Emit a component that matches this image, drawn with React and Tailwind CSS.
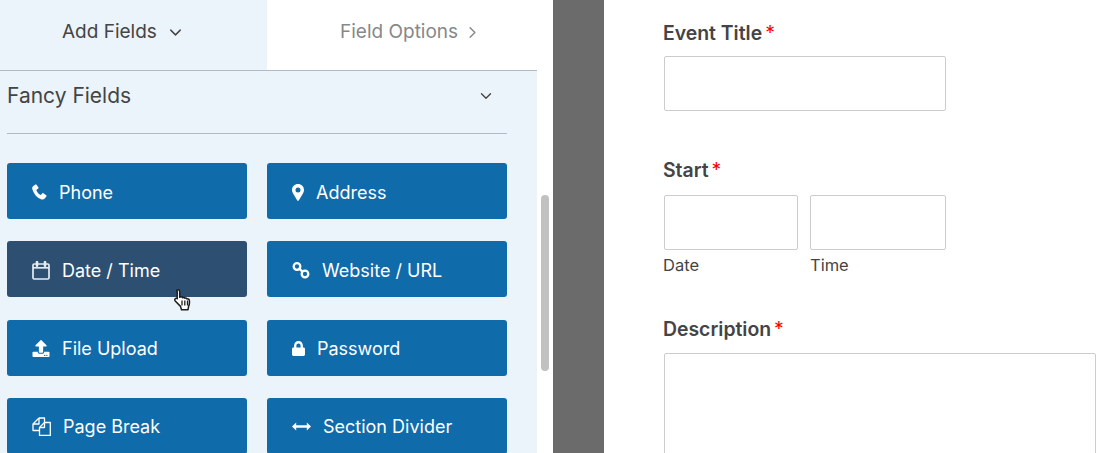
import React from "react";
import { ChevronDown, ChevronRight } from "lucide-react";
import { FaUpload, FaLock } from "react-icons/fa";

function PhoneIcon() {
  return (
    <svg width="15" height="16" viewBox="0 0 15 16" fill="currentColor">
      <path d="M3.400.6 1.300 1.900C.2 2.700 0 4 .4 5.400c1.300 4.300 4.400 8.100 8.600 9.800 1.500.6 3 .3 3.900-.9l1.500-1.900c.3-.4.200-.9-.2-1.200l-2.800-1.900c-.4-.3-.9-.2-1.200.1l-1.100 1.300c-.2.300-.6.300-.9.100-1.700-1-3-2.600-3.700-4.400-.1-.3 0-.7.300-.9l1.400-.9c.4-.3.500-.8.300-1.200L4.700.9C4.400.4 3.800.3 3.400.6z" />
    </svg>
  );
}

function MarkerIcon() {
  return (
    <svg width="12" height="17" viewBox="0 0 12 17" fill="currentColor">
      <path fillRule="evenodd" d="M6 0c3.300 0 6 2.600 6 5.900 0 1.100-.3 2-.8 3L6.900 16.200c-.4.800-1.400.8-1.800 0L.8 8.900C.3 7.900 0 7 0 5.900 0 2.600 2.700 0 6 0zm0 3.400a2.500 2.500 0 1 0 0 5 2.500 2.500 0 0 0 0-5z" />
    </svg>
  );
}

function CalendarIcon() {
  return (
    <svg width="18" height="19" viewBox="0 0 18 19" fill="none" stroke="#e6ebf1" strokeWidth="1.700">
      <rect x="1" y="3" width="16" height="15" rx="1.200" />
      <path d="M1 6.800h16" />
      <path d="M5 1v3.800M13 1v3.800" strokeWidth="2.600" strokeLinecap="round" />
    </svg>
  );
}

function LinkIcon() {
  return (
    <svg width="18" height="17" viewBox="0 0 18 17" fill="none" stroke="currentColor" strokeWidth="2.300">
      <circle cx="5" cy="4.500" r="3.300" />
      <circle cx="13" cy="12" r="3.300" />
      <path d="M7 6.300l4 3.800" />
    </svg>
  );
}

function CopyIcon() {
  return (
    <svg width="19" height="19" viewBox="0 0 19 19" fill="none" stroke="currentColor" strokeWidth="1.300" strokeLinejoin="round">
      <path d="M7 1h5.500v4.500M7 1 1 7v6.500h6" />
      <path d="M7 1v6H1" />
      <path d="M12.500 5.500h5.800v13H7.500v-8z" />
      <path d="M12.500 5.500v5h-5" />
    </svg>
  );
}

function ArrowsIcon() {
  return (
    <svg width="19" height="9" viewBox="0 0 19 9" fill="currentColor">
      <path d="M0 4.500 4.200.6v2.600h10.600V.6L19 4.500l-4.200 3.900V5.800H4.200v2.600z" />
    </svg>
  );
}

const fields = [
  { label: "Phone", icon: <PhoneIcon /> },
  { label: "Address", icon: <MarkerIcon /> },
  { label: "Date / Time", icon: <CalendarIcon />, active: true },
  { label: "Website / URL", icon: <LinkIcon /> },
  { label: "File Upload", icon: <FaUpload className="h-[17px] w-[18px]" /> },
  { label: "Password", icon: <FaLock className="h-[15px] w-[13px]" /> },
  { label: "Page Break", icon: <CopyIcon /> },
  { label: "Section Divider", icon: <ArrowsIcon /> },
];

function HandCursor() {
  return (
    <svg className="absolute left-[167px] top-[48px]" width="18" height="22" viewBox="0 0 18 22">
      <path
        d="M4 .8c1 0 1.700.7 1.700 1.600v5.800l1.100-.3c.8-.2 1.500.2 1.700.8.7-.5 1.700-.3 2.100.4.800-.4 1.800-.1 2.100.7.700-.2 2.400.1 2.600 1.300.4 2.200.2 4.300-.7 6.200l-.6 3.400H7.500l-1-3.300L1.200 12c-.7-.9-.5-1.900.2-2.400.6-.4 1.300-.3 1.800.1V2.400C2.300 1.500 3.100.8 4 .8z"
        fill="#fff"
        stroke="#1c1c1c"
        strokeWidth="1.500"
        strokeLinejoin="round"
      />
      <path d="M8 11.500v5M10.800 11.500v5M13.500 11.500v5" stroke="#1c1c1c" strokeWidth="1.300" fill="none" />
    </svg>
  );
}

function FieldButton({ field }) {
  return (
    <div className={`relative flex h-[56px] items-center gap-[12px] rounded-[3px] pl-[25px] pt-[2px] text-[18px] text-white ${field.active ? "bg-[#2d4f71]" : "bg-[#106bab]"}`}>
      {field.icon}
      <span>{field.label}</span>
      {field.active && <HandCursor />}
    </div>
  );
}

function Label({ text }) {
  return (
    <div className="flex text-[19.400px] font-semibold leading-[24px] text-[#444444]">
      {text}
      <span className="ml-[3px] font-normal text-[#ff0000]">*</span>
    </div>
  );
}

export default function App() {
  return (
    <div className="flex h-[453px] w-[1116px] overflow-hidden bg-white font-['Inter',sans-serif]">
      <div className="w-[537px] shrink-0 bg-[#ebf3fb]">
        <div className="flex h-[71px] border-b border-[#b0bac6] text-[19px]">
          <div className="flex w-[267px] items-center gap-[9px] pb-[6px] pl-[62px] text-[#444444]">
            Add Fields
            <ChevronDown className="h-[19px] w-[19px]" strokeWidth={1.800} />
          </div>
          <div className="flex flex-1 items-center gap-[5px] bg-white pb-[6px] pl-[73px] text-[#888888]">
            Field Options
            <ChevronRight className="h-[19px] w-[19px]" strokeWidth={1.800} />
          </div>
        </div>
        <div className="px-[7px]">
          <div className="flex h-[63px] w-[500px] items-center justify-between border-b border-[#b0bac6] pb-[12px] pr-[12px] text-[21px] text-[#444444]">
            Fancy Fields
            <ChevronDown className="h-[18px] w-[18px]" strokeWidth={1.800} />
          </div>
          <div className="mt-[29px] grid w-[500px] grid-cols-2 gap-x-[20px] gap-y-[22.330px]">
            {fields.map((f) => (
              <FieldButton key={f.label} field={f} />
            ))}
          </div>
        </div>
      </div>
      <div className="w-[16px] shrink-0 bg-white pl-[4px] pt-[195px]">
        <div className="h-[176px] w-[8px] rounded-full bg-[#c1c1c1]" />
      </div>
      <div className="w-[51px] shrink-0 bg-[#6b6b6b]" />
      <div className="flex-1 pl-[59px] pt-[21px]">
        <Label text="Event Title" />
        <div className="ml-[1px] mt-[11px] h-[55px] w-[282px] rounded-[2px] border border-[#cccccc]" />
        <div className="mt-[47px]">
          <Label text="Start" />
        </div>
        <div className="mt-[13px] flex gap-[12px]">
          <div>
            <div className="ml-[1px] h-[55px] w-[134px] rounded-[2px] border border-[#cccccc]" />
            <div className="mt-[4px] text-[16.500px] leading-[22px] text-[#444444]">Date</div>
          </div>
          <div>
            <div className="h-[55px] w-[136px] rounded-[2px] border border-[#cccccc]" />
            <div className="mt-[4px] text-[16.500px] leading-[22px] text-[#444444]">Time</div>
          </div>
        </div>
        <div className="mt-[41px]">
          <Label text="Description" />
        </div>
        <div className="ml-[1px] mt-[12px] h-[200px] w-[432px] rounded-[2px] border border-[#cccccc]" />
      </div>
    </div>
  );
}
